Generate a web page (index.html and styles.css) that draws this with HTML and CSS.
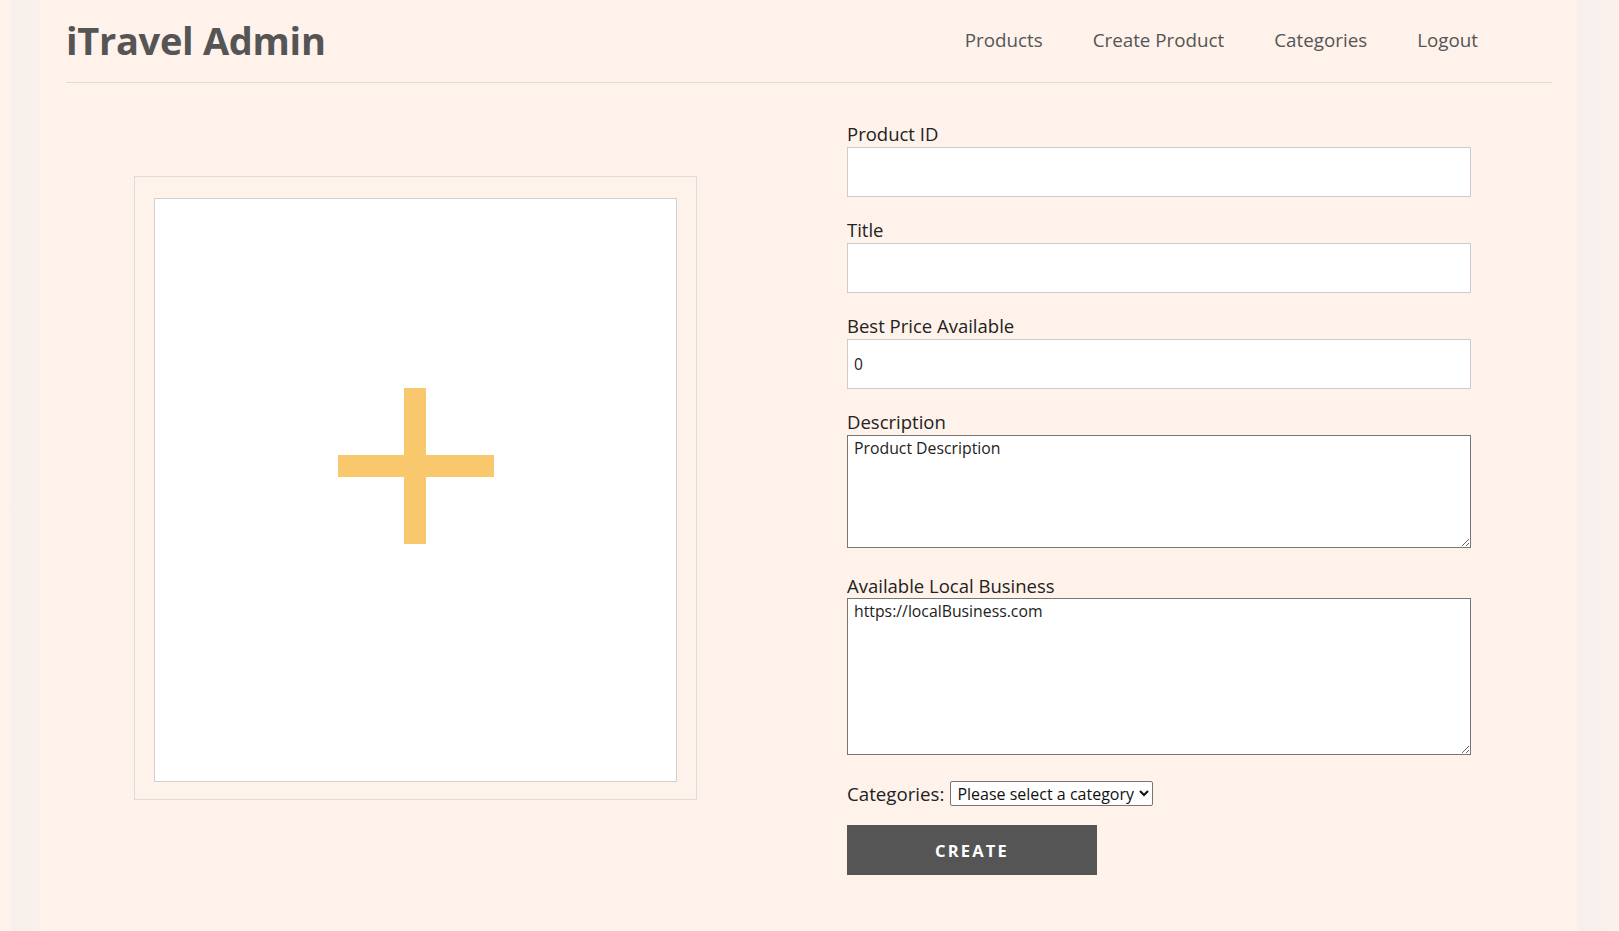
FILE: index.html
```html
<!DOCTYPE html>
<html lang="en">
<head>
<meta charset="utf-8">
<title>iTravel Admin</title>
<link rel="stylesheet" href="styles.css">
</head>
<body>
<div class="page">
  <header class="topbar">
    <h1 class="brand">iTravel Admin</h1>
    <nav class="nav">
      <a href="#">Products</a>
      <a href="#">Create Product</a>
      <a href="#">Categories</a>
      <a href="#">Logout</a>
    </nav>
  </header>
  <main class="layout">
    <section class="image-col">
      <div class="image-frame">
        <div class="image-drop">
          <svg class="plus" width="156" height="156" viewBox="0 0 156 156" aria-hidden="true">
            <rect x="66" y="0" width="22" height="156" fill="#f9c76c"/>
            <rect x="0" y="67" width="156" height="22" fill="#f9c76c"/>
          </svg>
        </div>
      </div>
    </section>
    <form class="form">
      <label class="field-label" for="pid">Product ID</label>
      <input class="text-input" id="pid" type="text">
      <label class="field-label" for="title">Title</label>
      <input class="text-input" id="title" type="text">
      <label class="field-label" for="price">Best Price Available</label>
      <input class="text-input" id="price" type="text" value="0">
      <label class="field-label" for="desc">Description</label>
      <textarea class="area area-desc" id="desc">Product Description</textarea>
      <label class="field-label" for="biz">Available Local Business</label>
      <textarea class="area area-biz" id="biz">https://localBusiness.com</textarea>
      <div class="cat-row">
        <label class="cat-label" for="cat">Categories:</label>
        <select class="cat-select" id="cat">
          <option>Please select a category</option>
        </select>
      </div>
      <button class="create-btn" type="button">CREATE</button>
    </form>
  </main>
</div>
</body>
</html>
```

FILE: styles.css
```css
html, body {
  margin: 0;
  height: 100%;
}
body {
  font-family: "Open Sans", "Noto Sans", sans-serif;
  background:
    linear-gradient(to right,
      #fef2ea 0, #fef2ea 10px,
      #f6efeb 11px, #f8f0ec 27px, #faf1eb 40px,
      #fef2ea 40px, #fef2ea 1578px,
      #f6efeb 1578px, #f8f0ec 1600px, #fcf1eb 1619px);
  color: #222;
}
.page {
  padding: 0 67px 0 66px;
  min-height: 931px;
  box-sizing: border-box;
}
.topbar {
  display: flex;
  align-items: center;
  justify-content: space-between;
  height: 80px;
  padding-bottom: 2px;
  border-bottom: 1px solid #dcdcdc;
}
.brand {
  margin: 0;
  font-size: 38px;
  font-weight: 700;
  color: #555;
  letter-spacing: -0.3px;
}
.nav {
  display: flex;
  gap: 50px;
  padding-right: 74px;
}
.nav a {
  color: #555;
  text-decoration: none;
  font-size: 18.8px;
}
.layout {
  display: grid;
  grid-template-columns: 781px 624px;
}
.image-col {
  padding: 93px 0 0 68px;
}
.image-frame {
  width: 563px;
  height: 624px;
  box-sizing: border-box;
  border: 1px solid #dcdcdc;
  padding: 21px 19px 17px 19px;
}
.image-drop {
  height: 100%;
  box-sizing: border-box;
  border: 1px solid #cfcfcf;
  background: #fff;
  display: flex;
  justify-content: center;
  align-items: flex-start;
  padding-top: 189px;
}
.form {
  padding-top: 39px;
}
.field-label {
  display: block;
  font-size: 18.5px;
  line-height: 24px;
  color: #222;
  margin-bottom: 1px;
}
.text-input {
  display: block;
  width: 100%;
  height: 50px;
  box-sizing: border-box;
  border: 1px solid #cccccc;
  background: #fff;
  padding: 0 6px;
  font-family: inherit;
  font-size: 15.5px;
  color: #222;
  margin: 0 0 21px 0;
  outline: none;
}
.area {
  display: block;
  width: 100%;
  box-sizing: border-box;
  border: 1px solid #767676;
  background: #fff;
  padding: 1px 6px;
  font-family: inherit;
  font-size: 15.8px;
  line-height: 22px;
  color: #222;
}
.area-desc {
  height: 113px;
  margin: 0 0 26px 0;
}
.area-biz {
  height: 157px;
  margin: -1px 0 26px 0;
}
.cat-row {
  display: flex;
  align-items: center;
  gap: 6px;
  height: 25px;
}
.cat-label {
  font-size: 18.7px;
  color: #222;
}
.cat-select {
  height: 25px;
  font-family: inherit;
  font-size: 16px;
  color: #111;
  border: 1px solid #767676;
  background: #fff;
  border-radius: 2px;
  padding: 0 2px;
}
.create-btn {
  display: block;
  margin-top: 19px;
  width: 250px;
  height: 50px;
  border: none;
  background: #555;
  color: #fff;
  font-family: inherit;
  font-weight: 700;
  font-size: 16.5px;
  letter-spacing: 2.2px;
  cursor: pointer;
}
```
